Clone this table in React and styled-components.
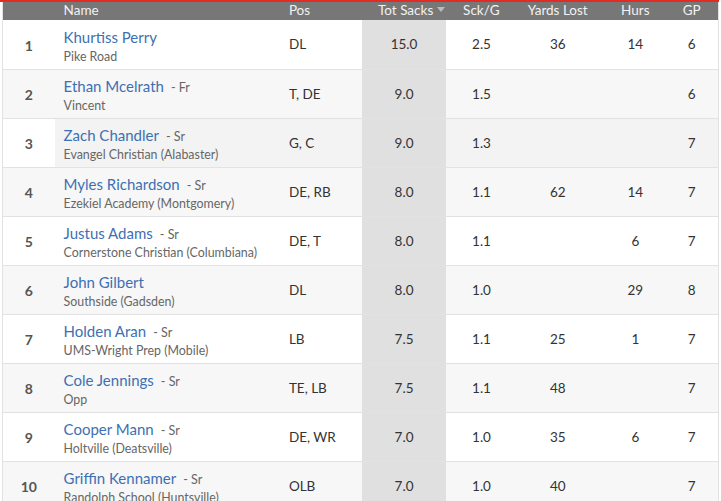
import React from 'react';
import styled, { createGlobalStyle } from 'styled-components';

const Global = createGlobalStyle`
  body {
    margin: 0;
    background: #fff;
    font-family: Lato, "Open Sans", sans-serif;
  }
`

const Page = styled.div`
  width: 719px;
  border-top: 2px solid #e32b25;
`

const Table = styled.table`
  margin-left: 2px;
  width: 717px;
  border-collapse: collapse;
  table-layout: fixed;
  border-left: 1px solid #e2e2e2;
  border-right: 1px solid #e2e2e2;
`

const HeadCell = styled.th`
  height: 18px;
  padding: 0;
  background: #777;
  color: #f2f2f2;
  font-size: 13.5px;
  font-weight: 400;
  text-align: ${(p) => p.align || 'center'};
  padding-left: ${(p) => p.pad || 0}px;
  line-height: 16px;
  vertical-align: top;
`

const Arrow = styled.span`
  display: inline-block;
  margin-left: 4px;
  width: 0;
  height: 0;
  border-left: 4px solid transparent;
  border-right: 4px solid transparent;
  border-top: 5px solid #bbb;
  vertical-align: 3px;
`

const Row = styled.tr`
  height: 49px;
  border-bottom: 1px solid #e2e2e2;
  background: ${(p) => (p.hovered ? '#f3f3f3' : p.even ? '#f7f7f7' : '#fff')};
`

const Cell = styled.td`
  padding: 0;
  padding-left: ${(p) => p.pad || 0}px;
  text-align: ${(p) => p.align || 'center'};
  vertical-align: middle;
  font-size: 13.5px;
  color: #333;
  background: ${(p) => (p.sorted ? '#e0e0e0' : 'transparent')};
`

const RankCell = styled(Cell)`
  font-size: 14px;
  font-weight: 700;
  color: #555;
  padding-top: 2px;
  background: ${(p) => (p.plain ? '#fff' : 'transparent')};
`

const NameBlock = styled.div`
  display: flex;
  flex-direction: column;
  gap: 3px;
  padding-top: 3px;
`

const NameLine = styled.div`
  display: flex;
  align-items: baseline;
  gap: 7px;
`

const PlayerLink = styled.a`
  color: #3d70b2;
  font-size: 15px;
  text-decoration: none;
`

const ClassTag = styled.span`
  color: #666;
  font-size: 12.5px;
`

const School = styled.span`
  color: #666;
  font-size: 12.4px;
`

const players = [
  { name: 'Khurtiss Perry', school: 'Pike Road', pos: 'DL', tot: '15.0', sg: '2.5', yl: '36', hurs: '14', gp: '6' },
  { name: 'Ethan Mcelrath', cls: 'Fr', school: 'Vincent', pos: 'T, DE', tot: '9.0', sg: '1.5', yl: '', hurs: '', gp: '6' },
  { name: 'Zach Chandler', cls: 'Sr', school: 'Evangel Christian (Alabaster)', pos: 'G, C', tot: '9.0', sg: '1.3', yl: '', hurs: '', gp: '7', hovered: true },
  { name: 'Myles Richardson', cls: 'Sr', school: 'Ezekiel Academy (Montgomery)', pos: 'DE, RB', tot: '8.0', sg: '1.1', yl: '62', hurs: '14', gp: '7' },
  { name: 'Justus Adams', cls: 'Sr', school: 'Cornerstone Christian (Columbiana)', pos: 'DE, T', tot: '8.0', sg: '1.1', yl: '', hurs: '6', gp: '7' },
  { name: 'John Gilbert', school: 'Southside (Gadsden)', pos: 'DL', tot: '8.0', sg: '1.0', yl: '', hurs: '29', gp: '8' },
  { name: 'Holden Aran', cls: 'Sr', school: 'UMS-Wright Prep (Mobile)', pos: 'LB', tot: '7.5', sg: '1.1', yl: '25', hurs: '1', gp: '7' },
  { name: 'Cole Jennings', cls: 'Sr', school: 'Opp', pos: 'TE, LB', tot: '7.5', sg: '1.1', yl: '48', hurs: '', gp: '7' },
  { name: 'Cooper Mann', cls: 'Sr', school: 'Holtville (Deatsville)', pos: 'DE, WR', tot: '7.0', sg: '1.0', yl: '35', hurs: '6', gp: '7' },
  { name: 'Griffin Kennamer', cls: 'Sr', school: 'Randolph School (Huntsville)', pos: 'OLB', tot: '7.0', sg: '1.0', yl: '40', hurs: '', gp: '7' },
];

const App = () => {
  return (
    <Page>
      <Global />
      <Table>
        <colgroup>
          <col style={{ width: 52 }} />
          <col style={{ width: 225 }} />
          <col style={{ width: 82 }} />
          <col style={{ width: 84 }} />
          <col style={{ width: 64 }} />
          <col style={{ width: 95 }} />
          <col style={{ width: 60 }} />
          <col style={{ width: 53 }} />
        </colgroup>
        <thead>
          <tr>
            <HeadCell />
            <HeadCell align="left" pad={9}>Name</HeadCell>
            <HeadCell align="left" pad={9}>Pos</HeadCell>
            <HeadCell align="left" pad={16}>Tot Sacks<Arrow /></HeadCell>
            <HeadCell align="left" pad={17}>Sck/G</HeadCell>
            <HeadCell>Yards Lost</HeadCell>
            <HeadCell>Hurs</HeadCell>
            <HeadCell>GP</HeadCell>
          </tr>
        </thead>
        <tbody>
          {players.map((p, i) => (
            <Row key={p.name} even={i % 2 === 1} hovered={p.hovered}>
              <RankCell plain={p.hovered}>{i + 1}</RankCell>
              <Cell align="left" pad={9}>
                <NameBlock>
                  <NameLine>
                    <PlayerLink href="#">{p.name}</PlayerLink>
                    {p.cls ? <ClassTag>- {p.cls}</ClassTag> : null}
                  </NameLine>
                  <School>{p.school}</School>
                </NameBlock>
              </Cell>
              <Cell align="left" pad={9}>{p.pos}</Cell>
              <Cell sorted>{p.tot}</Cell>
              <Cell align="left" pad={26}>{p.sg}</Cell>
              <Cell>{p.yl}</Cell>
              <Cell>{p.hurs}</Cell>
              <Cell>{p.gp}</Cell>
            </Row>
          ))}
        </tbody>
      </Table>
    </Page>
  );
};

export default App;
